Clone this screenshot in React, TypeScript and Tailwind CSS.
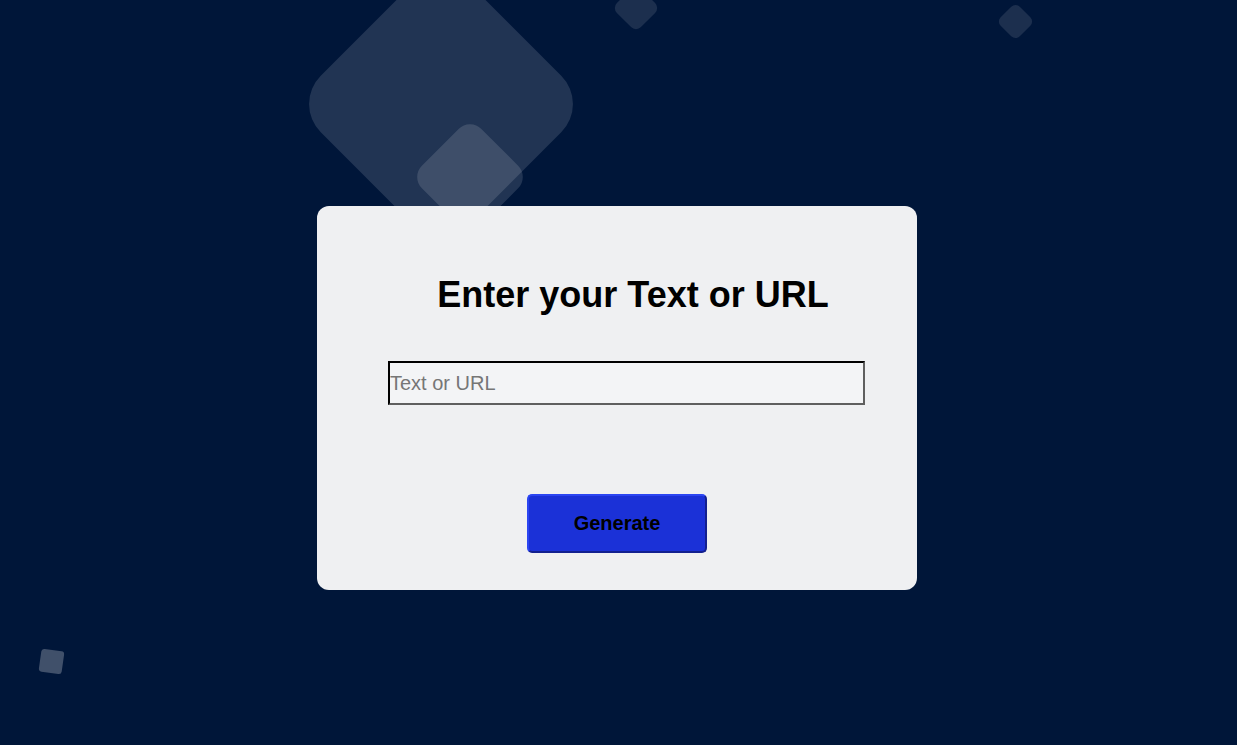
import React from 'react';

export default function App() {
  return (
    <div className="relative min-h-screen w-full overflow-hidden bg-[#001639] font-['Liberation_Sans',Arial,sans-serif]">
      {/* floating background squares */}
      <div className="absolute left-[336px] top-[-1px] h-[210px] w-[210px] rotate-45 rounded-[40px] bg-white/[0.13]"></div>
      <div className="absolute left-[428px] top-[135px] h-[84px] w-[84px] rotate-45 rounded-[16px] bg-white/[0.13]"></div>
      <div className="absolute left-[619px] top-[-9px] h-[34px] w-[34px] rotate-45 rounded-[7px] bg-white/[0.11]"></div>
      <div className="absolute left-[1002px] top-[8px] h-[27px] w-[27px] rotate-45 rounded-[6px] bg-white/[0.11]"></div>
      <div className="absolute left-[40px] top-[650px] h-[23px] w-[23px] rotate-[8deg] rounded-[3px] bg-white/[0.25]"></div>

      <div className="relative z-10 flex flex-col items-center pt-[206px] pr-[3px]">
        <div className="flex h-[384px] w-[600px] flex-col items-center rounded-xl bg-[#eff0f2] pt-[68px] pl-[71px] pr-[52px]">
          <h1 className="ml-[13px] text-[36px] font-bold leading-[41px] text-black">Enter your Text or URL</h1>
          <input
            type="text"
            placeholder="Text or URL"
            className="mt-[46px] h-[44px] w-full border-2 border-t-black border-l-black border-b-[#5f5f5f] border-r-[#5f5f5f] bg-[#f3f4f6] px-0 text-[20px] text-black outline-none placeholder:text-[#767676]"
          />
          <button className="mt-[89px] -ml-[19px] h-[59px] w-[180px] rounded-[5px] border-2 border-t-[#2b45f2] border-l-[#2b45f2] border-b-[#13208f] border-r-[#13208f] bg-[#1b31d7] pb-[2px] text-[20px] font-bold text-black">
            Generate
          </button>
        </div>
      </div>
    </div>
  );
}
